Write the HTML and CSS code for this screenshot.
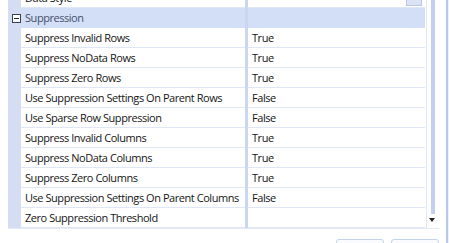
FILE: index.html
```html
<!DOCTYPE html>
<html>
	<head>
		<meta charset='utf-8'/>
		<title>Properties</title>
		<link rel="stylesheet" href="styles.css">
	</head>
	<body>
		<div class="panel">
			<div class="gridwrap">
				<div class="grid">
					<div class="rows">
						<div class="row">
							<div class="gutter"></div>
							<div class="name">Data Style</div>
							<div class="split"></div>
							<div class="value"><span class="dots"></span></div>
						</div>
						<div class="row category">
							<div class="gutter"><span class="toggle"></span></div>
							<div class="name">Suppression</div>
							<div class="split"></div>
							<div class="value"></div>
						</div>
						<div class="row">
							<div class="gutter"></div>
							<div class="name">Suppress Invalid Rows</div>
							<div class="split"></div>
							<div class="value">True</div>
						</div>
						<div class="row">
							<div class="gutter"></div>
							<div class="name">Suppress NoData Rows</div>
							<div class="split"></div>
							<div class="value">True</div>
						</div>
						<div class="row">
							<div class="gutter"></div>
							<div class="name">Suppress Zero Rows</div>
							<div class="split"></div>
							<div class="value">True</div>
						</div>
						<div class="row">
							<div class="gutter"></div>
							<div class="name">Use Suppression Settings On Parent Rows</div>
							<div class="split"></div>
							<div class="value">False</div>
						</div>
						<div class="row">
							<div class="gutter"></div>
							<div class="name">Use Sparse Row Suppression</div>
							<div class="split"></div>
							<div class="value">False</div>
						</div>
						<div class="row">
							<div class="gutter"></div>
							<div class="name">Suppress Invalid Columns</div>
							<div class="split"></div>
							<div class="value">True</div>
						</div>
						<div class="row">
							<div class="gutter"></div>
							<div class="name">Suppress NoData Columns</div>
							<div class="split"></div>
							<div class="value">True</div>
						</div>
						<div class="row">
							<div class="gutter"></div>
							<div class="name">Suppress Zero Columns</div>
							<div class="split"></div>
							<div class="value">True</div>
						</div>
						<div class="row">
							<div class="gutter"></div>
							<div class="name">Use Suppression Settings On Parent Columns</div>
							<div class="split"></div>
							<div class="value">False</div>
						</div>
						<div class="row">
							<div class="gutter"></div>
							<div class="name">Zero Suppression Threshold</div>
							<div class="split"></div>
							<div class="value"></div>
						</div>
					</div>
					<div class="scrollbar">
						<div class="thumb"></div>
						<div class="arrow"></div>
					</div>
				</div>
				<div class="buttons">
					<div class="btn"></div>
					<div class="btn"></div>
				</div>
			</div>
			<div class="edge"></div>
			<div class="behind"></div>
		</div>
	</body>
</html>
```

FILE: styles.css
```css
html, body {
	margin: 0;
	background: #fff;
	overflow: hidden;
}
body {
	font-family: "Open Sans", "Noto Sans", sans-serif;
	font-size: 11px;
	letter-spacing: -0.45px;
	color: #141414;
	height: 243px;
}
.panel {
	display: flex;
	height: 243px;
}
.gridwrap {
	width: 436px;
	padding-left: 8px;
	display: flex;
	flex-direction: column;
}
.grid {
	display: flex;
	flex-shrink: 0;
	height: 228px;
	border-bottom: 1px solid #e3e9f6;
	overflow: hidden;
}
.rows {
	width: 418px;
	margin-top: -12px;
	border-right: 1px solid #e3e9f6;
}
.row {
	display: grid;
	grid-template-columns: 13px 224px 3px 177px;
	height: 20px;
}
.row .name, .row .value {
	border-bottom: 1px solid #dfe6f5;
	padding-left: 4px;
	line-height: 19px;
	white-space: nowrap;
	overflow: hidden;
}
.gutter {
	background: #d5ddf3;
	display: flex;
	align-items: center;
	justify-content: center;
}
.split {
	background: #cbd6ef;
}
.value {
	position: relative;
}
.dots {
	position: absolute;
	right: 3px;
	bottom: 1px;
	width: 14px;
	height: 14px;
	background: #dbe4f7;
	border: 1px solid #b7c6e6;
}
.category .name, .category .value {
	background: #d3dff6;
	border-bottom-color: #d3dff6;
	color: #44506b;
}
.toggle {
	width: 7px;
	height: 7px;
	border: 1px solid #3c4150;
	background: #fff;
	position: relative;
	margin-left: 3px;
}
.toggle::after {
	content: "";
	position: absolute;
	left: 1px;
	top: 3px;
	width: 5px;
	height: 1px;
	background: #222;
}
.scrollbar {
	width: 10px;
	display: flex;
	flex-direction: column;
	align-items: center;
	padding-bottom: 2px;
}
.thumb {
	flex: 1;
	width: 4px;
	margin-left: 1px;
	background: #c3cfec;
}
.arrow {
	margin-top: 4px;
	margin-bottom: 4px;
	width: 0;
	height: 0;
	border-left: 3px solid transparent;
	border-right: 3px solid transparent;
	border-top: 4px solid #222;
}
.buttons {
	display: flex;
	justify-content: flex-end;
	gap: 7px;
	margin-top: 10px;
}
.btn {
	width: 46px;
	height: 14px;
	border: 1px solid #c5d2ec;
	border-radius: 3px;
	background: linear-gradient(#fbfcff, #eef2fb);
}
.edge {
	width: 2px;
	margin-left: 7px;
	background: #b9c8ea;
}
.behind {
	flex: 1;
	background: repeating-linear-gradient(#fff 0, #fff 19px, #e6ecf8 19px, #e6ecf8 20px);
	border-left: 1px solid #eef2fa;
}
```
